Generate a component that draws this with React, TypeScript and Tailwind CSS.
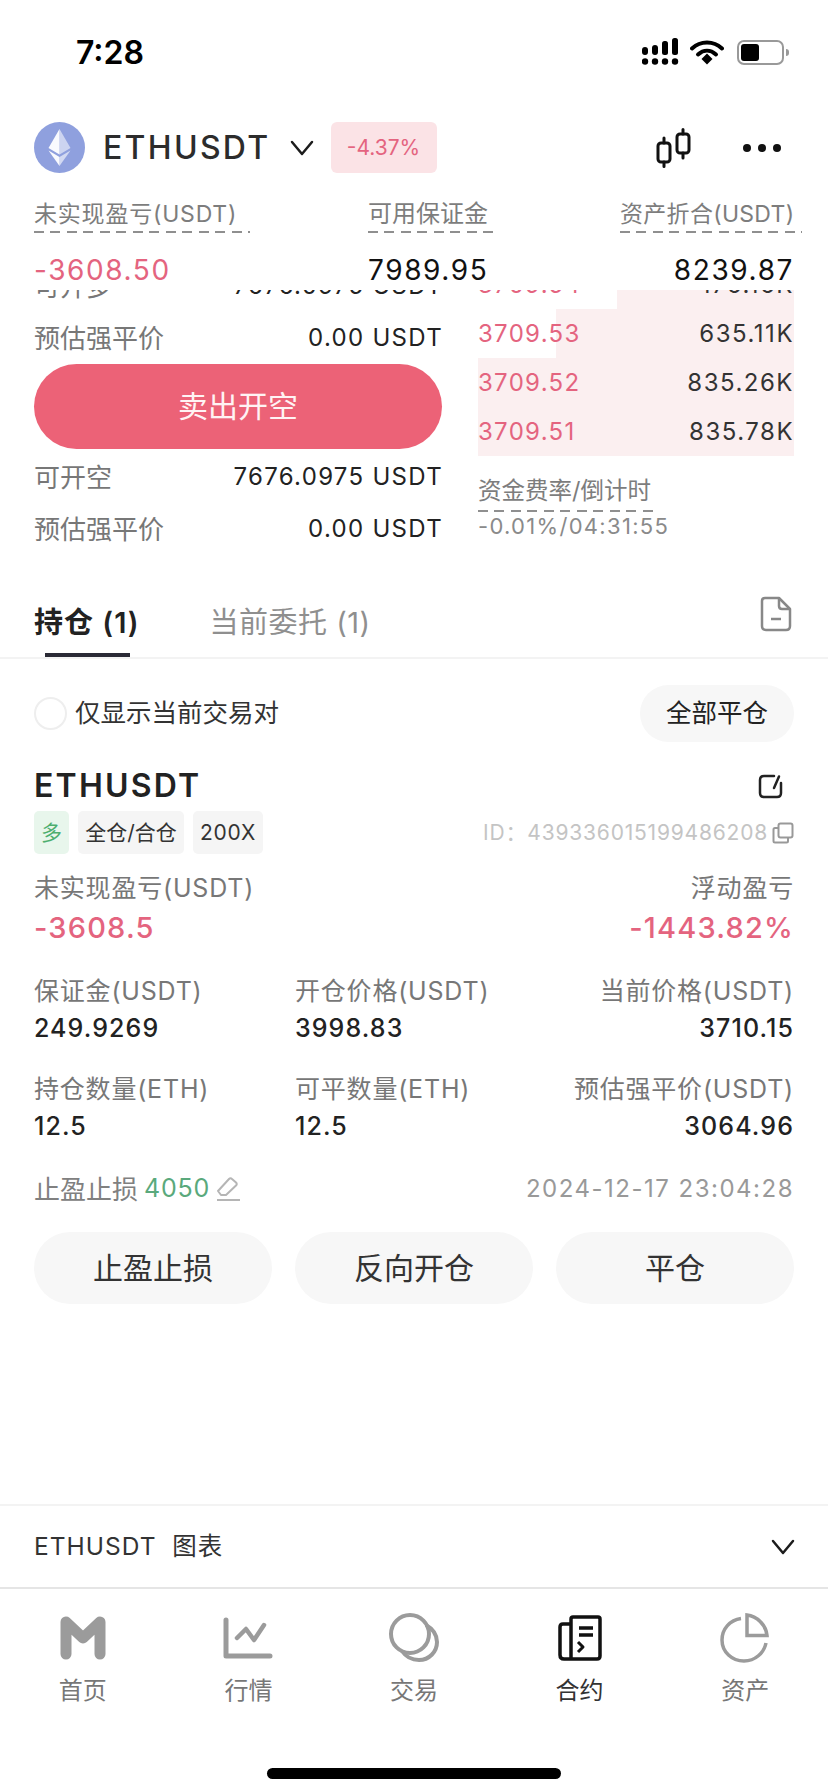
const RED = "text-[#e4647f]";

const Chevron = ({ className }: { className?: string }) => (
  <svg width="24" height="16" viewBox="0 0 24 16" fill="none" stroke="#1c1c1c" strokeWidth="2.500" strokeLinecap="round" strokeLinejoin="round" className={className}>
    <path d="M2 2L12 14L22 2" />
  </svg>
);

const StatusIcons = () => (
  <div className="flex items-center">
    <svg width="38" height="28" viewBox="0 0 38 28" className="text-black">
      <g fill="currentColor">
        <rect x="0" y="9" width="6" height="8" rx="3" />
        <rect x="10" y="7" width="6" height="10" rx="3" />
        <rect x="20" y="3" width="6" height="14" rx="2.5" />
        <rect x="30" y="0" width="6" height="17" rx="2.5" />
        <circle cx="3" cy="23.5" r="3.2" />
        <circle cx="13" cy="23.5" r="3.2" />
        <circle cx="23" cy="23.5" r="3.2" />
        <circle cx="33" cy="23.5" r="3.2" />
      </g>
    </svg>
    <svg width="34" height="26" viewBox="0 0 34 26" className="ml-[10px]">
      <path d="M2 9.5C10.500 1.500 23.500 1.500 32 9.500" fill="none" stroke="#000" strokeWidth="4" strokeLinecap="round" />
      <path d="M8 15.500C13.500 10.500 20.500 10.500 26 15.500" fill="none" stroke="#000" strokeWidth="4" strokeLinecap="round" />
      <path d="M11.500 20L17 14.500L22.500 20L17 25.500Z" fill="#000" />
    </svg>
    <div className="ml-[13px] flex items-center">
      <div className="h-[25px] w-[47px] rounded-[7px] border-2 border-[#999] p-[2px]">
        <div className="h-full w-[18px] rounded-[3px] bg-black" />
      </div>
      <div className="ml-[2px] h-[7px] w-[3px] rounded-r-sm bg-[#999]" />
    </div>
  </div>
);

const EthLogo = () => (
  <svg width="51" height="51" viewBox="0 0 51 51" className="shrink-0">
    <circle cx="25.500" cy="25.500" r="25.500" fill="#8fa0de" />
    <path d="M25.500 7L14.500 26L25.500 32.500Z" fill="#fff" fillOpacity="0.95" />
    <path d="M25.500 7L36.500 26L25.500 32.500Z" fill="#fff" fillOpacity="0.55" />
    <path d="M14.500 28.500L25.500 44V35Z" fill="#fff" fillOpacity="0.95" />
    <path d="M36.500 28.500L25.500 44V35Z" fill="#fff" fillOpacity="0.6" />
  </svg>
);

const CandleIcon = () => (
  <svg width="36" height="40" viewBox="0 0 36 40" fill="none" stroke="#111" strokeWidth="3" strokeLinecap="round">
    <rect x="2" y="15" width="12" height="19" rx="3" />
    <path d="M8 10V15M8 34V38.500" />
    <rect x="21" y="6" width="12" height="19" rx="3" />
    <path d="M27 1.500V6M27 25V30" />
  </svg>
);

const DashLine = ({ className }: { className: string }) => (
  <div className={`h-[2px] bg-[repeating-linear-gradient(90deg,#8f8f8f_0,#8f8f8f_10px,transparent_10px,transparent_16.500px)] ${className}`} />
);

const FormRow = ({ label, value }: { label: string; value: string }) => (
  <div className="flex h-[52px] items-center justify-between">
    <span className="text-[26px] text-[#777]">{label}</span>
    <span className="-mr-[1px] text-[24px] tracking-[1.3px] text-[#222]">{value}</span>
  </div>
);

const bookRows = [
  { price: "3709.54", size: "176.16K", bar: "w-[177px]" },
  { price: "3709.53", size: "635.11K", bar: "w-[238px]" },
  { price: "3709.52", size: "835.26K", bar: "w-[316px]" },
  { price: "3709.51", size: "835.78K", bar: "w-[316px]" },
];

const Field = ({ label, value, right }: { label: string; value: string; right?: boolean }) => (
  <div className={right ? "text-right" : ""}>
    <div className="h-[37px] text-[25px] leading-[37px] tracking-[0.8px] text-[#777]">{label}</div>
    <div className="h-[37px] text-[25px] font-medium leading-[37px] tracking-[1.1px] text-[#222]">{value}</div>
  </div>
);

const Tag = ({ children, className }: { children: React.ReactNode; className: string }) => (
  <span className={`flex h-[43px] items-center justify-center rounded-[5px] text-[21px] ${className}`}>{children}</span>
);

const ActionButton = ({ label }: { label: string }) => (
  <button className="flex h-[72px] w-[238px] items-center justify-center rounded-full bg-[#f7f7f7] text-[30px] text-[#333]">
    {label}
  </button>
);

const navItems = [
  {
    label: "首页",
    icon: (
      <svg width="46" height="44" viewBox="0 0 46 44" fill="none">
        <path d="M6 6V38M40 38V6L23 22L6 6" stroke="#9b9b9b" strokeWidth="11" strokeLinecap="round" strokeLinejoin="round" />
      </svg>
    ),
  },
  {
    label: "行情",
    icon: (
      <svg width="50" height="44" viewBox="0 0 50 44" fill="none" stroke="#9b9b9b" strokeLinecap="round" strokeLinejoin="round">
        <path d="M3 4V40H47" strokeWidth="5" />
        <path d="M14 22L23 13L31 24L41 9" strokeWidth="4.500" />
      </svg>
    ),
  },
  {
    label: "交易",
    icon: (
      <svg width="52" height="50" viewBox="0 0 52 50" fill="none" stroke="#9b9b9b" strokeWidth="4">
        <circle cx="22" cy="21" r="19" />
        <path d="M38 12C45 16 49 22 49 29C49 39 41 47 31 47C24 47 18 44 14 38" />
      </svg>
    ),
  },
  {
    label: "合约",
    icon: (
      <svg width="44" height="46" viewBox="0 0 44 46" fill="none" stroke="#111" strokeWidth="3.500" strokeLinejoin="round">
        <path d="M13 9H5C3 9 2 10 2 12V40C2 42.500 3.500 44 6 44H39C41 44 42 43 42 41V4C42 2.500 41.500 2 40 2H15C13.500 2 13 3 13 4V44" />
        <path d="M21 13H35M21 20H35" />
        <path d="M20 27L25 32L20 37" strokeWidth="3" />
      </svg>
    ),
  },
  {
    label: "资产",
    icon: (
      <svg width="50" height="50" viewBox="0 0 50 50" fill="none" stroke="#9b9b9b" strokeWidth="3.500">
        <path d="M21 5.500C10 7 2 16 2 27C2 39 12 48 24 48C35 48 44 40 46 30" />
        <path d="M27 2C37 3 46 12 47 22.500H27Z" />
      </svg>
    ),
  },
];

export default function App() {
  return (
    <div className="flex h-[1792px] w-[828px] flex-col overflow-hidden bg-white font-['Inter','Noto_Sans_CJK_SC',sans-serif]">
      {/* status bar */}
      <div className="flex h-[122px] shrink-0 items-start justify-between pl-[76px] pr-[39px] pt-[38px]">
        <span className="text-[32px] font-semibold leading-[30px] text-black">7:28</span>
        <StatusIcons />
      </div>

      {/* pair header */}
      <div className="flex h-[51px] shrink-0 items-center pl-[34px] pr-[47px]">
        <EthLogo />
        <span className="ml-[18px] text-[32px] font-medium tracking-[2.300px] text-[#2c2c2c]">ETHUSDT</span>
        <Chevron className="ml-[19px]" />
        <span className={`ml-[17px] flex h-[51px] w-[106px] items-center justify-center rounded-[6px] bg-[#fbe3e6] text-[21px] ${RED}`}>-4.37%</span>
        <div className="ml-auto flex items-center gap-[51px]">
          <CandleIcon />
          <div className="flex gap-[7px]">
            <span className="h-[8px] w-[8px] rounded-full bg-[#111]" />
            <span className="h-[8px] w-[8px] rounded-full bg-[#111]" />
            <span className="h-[8px] w-[8px] rounded-full bg-[#111]" />
          </div>
        </div>
      </div>

      {/* account summary */}
      <div className="flex h-[117px] shrink-0 justify-between pl-[34px] pr-[34px] pt-[26px]">
        <div className="w-[216px]">
          <div className="h-[30px] whitespace-nowrap text-[23px] leading-[30px] tracking-[0.8px] text-[#7d7d7d]">未实现盈亏(USDT)</div>
          <DashLine className="mt-[2px] w-[216px]" />
          <div className={`mt-[20px] text-[28px] leading-[34px] tracking-[1.6px] ${RED}`}>-3608.50</div>
        </div>
        <div className="ml-[118px] w-[130px]">
          <div className="h-[30px] text-[24px] leading-[30px] text-[#7d7d7d]">可用保证金</div>
          <DashLine className="mt-[2px] w-[130px]" />
          <div className="mt-[20px] text-[28px] leading-[34px] tracking-[1.6px] text-[#111]">7989.95</div>
        </div>
        <div className="ml-auto w-[174px] text-right">
          <div className="h-[30px] whitespace-nowrap text-[23px] leading-[30px] tracking-[0.3px] text-[#7d7d7d]">资产折合(USDT)</div>
          <DashLine className="mt-[2px] w-[182px]" />
          <div className="mt-[20px] text-[28px] leading-[34px] tracking-[1.6px] text-[#111]">8239.87</div>
        </div>
      </div>

      {/* order form, scrolled under the summary */}
      <div className="h-[280px] shrink-0 overflow-hidden">
        <div className="-mt-[30px] flex pl-[34px] pr-[34px]">
          <div className="w-[408px]">
            <FormRow label="可开多" value="7676.0975 USDT" />
            <FormRow label="预估强平价" value="0.00 USDT" />
            <button className="flex h-[85px] w-full items-center justify-center rounded-full bg-[#ec6277] text-[30px] text-[#fff3f4]">卖出开空</button>
            <div className="mt-[2px]">
              <FormRow label="可开空" value="7676.0975 USDT" />
              <FormRow label="预估强平价" value="0.00 USDT" />
            </div>
          </div>
          <div className="ml-[36px] flex-1">
            {bookRows.map((row) => (
              <div key={row.price} className="relative flex h-[49px] items-center justify-between">
                <div className={`absolute inset-y-0 right-0 bg-[#fbeff0] ${row.bar}`} />
                <span className={`relative text-[24px] tracking-[1.3px] ${RED}`}>{row.price}</span>
                <span className="relative text-[24px] tracking-[1.5px] text-[#333]">{row.size}</span>
              </div>
            ))}
            <div className="mt-[20px] text-[23.500px] leading-[30px] text-[#7d7d7d]">资金费率/倒计时</div>
            <DashLine className="mt-[4px] w-[180px]" />
            <div className="mt-[1px] text-[22px] leading-[26px] tracking-[1.3px] text-[#8a8a8a]">-0.01%/04:31:55</div>
          </div>
        </div>
      </div>

      {/* tabs */}
      <div className="relative flex h-[89px] shrink-0 border-b-2 border-[#f3f3f3] pl-[34px] pr-[36px]">
        <div className="relative mt-[33px] flex h-[54px] flex-col">
          <span className="text-[29px] font-semibold leading-[40px] tracking-[1px] text-[#222]">持仓 (1)</span>
          <div className="absolute bottom-0 left-[11px] h-[4px] w-[85px] bg-[#2a2a35]" />
        </div>
        <span className="ml-[70px] mt-[33px] text-[29px] leading-[40px] tracking-[0.5px] text-[#8f8f8f]">当前委托 (1)</span>
        <svg width="32" height="36" viewBox="0 0 32 36" fill="none" stroke="#888" strokeWidth="2.500" strokeLinejoin="round" className="ml-auto mt-[26px]">
          <path d="M5 2H19L30 13V30C30 32.500 28.500 34 26 34H6C3.500 34 2 32.500 2 30V5C2 3 3 2 5 2Z" />
          <path d="M19 2V10C19 12 20 13 22 13H30" />
          <path d="M11 23H21" />
        </svg>
      </div>

      {/* positions */}
      <div className="shrink-0 px-[34px]">
        <div className="mt-[26px] flex h-[57px] items-center justify-between">
          <div className="flex items-center">
            <span className="h-[33px] w-[33px] rounded-full border-2 border-[#eeeeee]" />
            <span className="ml-[8px] text-[25.500px] text-[#333]">仅显示当前交易对</span>
          </div>
          <button className="flex h-[57px] w-[154px] items-center justify-center rounded-full bg-[#f7f7f7] text-[25.500px] text-[#222]">全部平仓</button>
        </div>

        <div className="mt-[24px] flex h-[40px] items-center justify-between pr-[10px]">
          <span className="text-[32px] font-semibold tracking-[2.200px] text-[#222]">ETHUSDT</span>
          <svg width="26" height="26" viewBox="0 0 26 26" fill="none" stroke="#222" strokeWidth="2.500" strokeLinecap="round" strokeLinejoin="round">
            <path d="M16 3H6C3.500 3 2 4.500 2 7V20C2 22.500 3.500 24 6 24H19C21.500 24 23 22.500 23 20V10" />
            <path d="M21 3.500L16 15" />
          </svg>
        </div>

        <div className="mt-[5px] flex items-center">
          <Tag className="w-[35px] bg-[#e8f6ec] text-[#4cae6f]">多</Tag>
          <Tag className="ml-[9px] w-[106px] bg-[#f5f5f5] text-[#333]">全仓/合仓</Tag>
          <Tag className="ml-[9px] w-[70px] bg-[#f5f5f5] tracking-[0.8px] text-[#333]">200X</Tag>
          <span className="ml-auto whitespace-nowrap text-[21px] tracking-[0.8px] text-[#c4c4c4]">ID：439336015199486208</span>
          <svg width="22" height="22" viewBox="0 0 22 22" fill="none" stroke="#999" strokeWidth="2" className="ml-[4px]">
            <rect x="6.500" y="1.500" width="14" height="14" rx="2" />
            <path d="M6 6H3C2 6 1.500 6.500 1.500 7.500V19C1.500 20 2 20.500 3 20.500H14.500C15.500 20.500 16 20 16 19V16" />
          </svg>
        </div>

        <div className="mt-[16px] flex items-center justify-between text-[25px] leading-[36px] tracking-[0.8px] text-[#777]">
          <span>未实现盈亏(USDT)</span>
          <span>浮动盈亏</span>
        </div>
        <div className={`mt-[4px] flex items-center justify-between text-[29px] font-medium leading-[36px] tracking-[1.2px] ${RED}`}>
          <span>-3608.5</span>
          <span>-1443.82%</span>
        </div>

        <div className="mt-[27px] grid grid-cols-[261px_1fr_auto] gap-y-[24px]">
          <Field label="保证金(USDT)" value="249.9269" />
          <Field label="开仓价格(USDT)" value="3998.83" />
          <Field label="当前价格(USDT)" value="3710.15" right />
          <Field label="持仓数量(ETH)" value="12.5" />
          <Field label="可平数量(ETH)" value="12.5" />
          <Field label="预估强平价(USDT)" value="3064.96" right />
        </div>

        <div className="mt-[26px] flex h-[36px] items-center">
          <span className="text-[26px] text-[#808080]">止盈止损</span>
          <span className="ml-[6px] text-[25px] tracking-[0.8px] text-[#5aa97c]">4050</span>
          <svg width="26" height="26" viewBox="0 0 26 26" fill="none" stroke="#b5b5b5" strokeWidth="2" strokeLinejoin="round" className="ml-[5px]">
            <path d="M3 15L14 3C15 2 16 2 17 3L21 6.500C22 7.500 22 8.500 21 9.500L11 19H6L3 15Z" />
            <path d="M2 24H25" />
          </svg>
          <span className="ml-auto text-[24px] tracking-[1.5px] text-[#999]">2024-12-17 23:04:28</span>
        </div>

        <div className="mt-[25px] flex justify-between">
          <ActionButton label="止盈止损" />
          <ActionButton label="反向开仓" />
          <ActionButton label="平仓" />
        </div>
      </div>

      <div className="flex-1" />

      {/* chart drawer */}
      <div className="flex h-[85px] shrink-0 items-center justify-between border-y-2 border-t-[#f3f3f3] border-b-[#e5e5e5] pl-[34px] pr-[33px]">
        <span className="text-[24.500px] tracking-[1px] text-[#333]">ETHUSDT&nbsp; 图表</span>
        <Chevron />
      </div>

      {/* tab bar */}
      <div className="flex h-[203px] shrink-0 flex-col">
        <div className="grid grid-cols-5 pt-[24px]">
          {navItems.map((item) => (
            <div key={item.label} className="flex flex-col items-center">
              <div className="flex h-[50px] items-center justify-center">{item.icon}</div>
              <span className={`mt-[13px] text-[24px] leading-[30px] ${item.label === "合约" ? "text-[#333]" : "text-[#777]"}`}>{item.label}</span>
            </div>
          ))}
        </div>
        {/* home indicator */}
        <div className="mx-auto mt-[62px] h-[11px] w-[294px] rounded-full bg-black" />
      </div>
    </div>
  );
}
